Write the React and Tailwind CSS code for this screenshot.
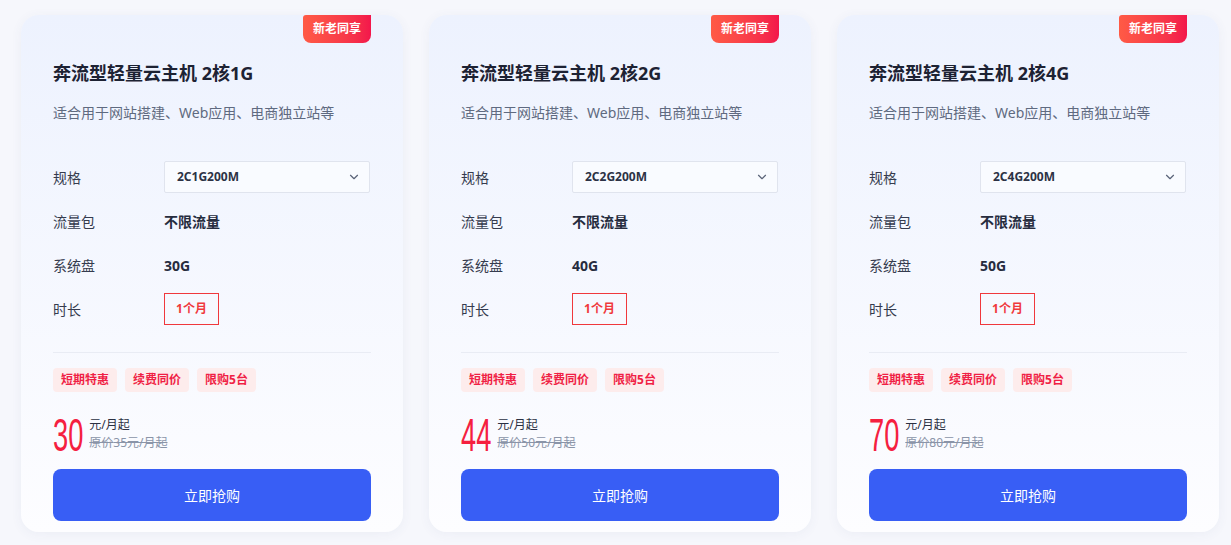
import { ChevronDown } from "lucide-react";

const plans = [
  { core: "2核1G", spec: "2C1G200M", disk: "30G", price: "30", old: "35" },
  { core: "2核2G", spec: "2C2G200M", disk: "40G", price: "44", old: "50" },
  { core: "2核4G", spec: "2C4G200M", disk: "50G", price: "70", old: "80" },
];

const Row = ({ label, children }) => (
  <div className="flex items-center h-8">
    <div className="w-[111px] text-[14px] text-[#353b4e]">{label}</div>
    <div className="flex-1">{children}</div>
  </div>
);

const PlanCard = ({ plan }) => {
  return (
    <div className="relative w-[382px] h-[517px] rounded-[18px] bg-gradient-to-b from-[#edf2fe] to-[#fdfdff] shadow-[0_2px_12px_rgba(60,80,140,0.06)] px-8 pt-[45px]">
      <div className="absolute top-0 right-8 w-[68px] h-7 rounded-b-[8px] rounded-tl-[3px] bg-gradient-to-r from-[#ff5a45] to-[#f3164b] text-white text-[12px] font-bold flex items-center justify-center">
        新老同享
      </div>
      <div className="text-[18px] leading-[26px] font-bold text-[#1d2233]">
        奔流型轻量云主机 {plan.core}
      </div>
      <div className="mt-[16px] text-[14px] leading-[22px] text-[#5f6a80]">
        适合用于网站搭建、Web应用、电商独立站等
      </div>
      <div className="mt-[37px] flex flex-col gap-3">
        <Row label="规格">
          <div className="h-8 w-[206px] border border-[#e0e4ee] rounded-[2px] bg-[#f9fbff] flex items-center justify-between pl-3 pr-2">
            <span className="text-[12px] font-bold text-[#2c3245]">{plan.spec}</span>
            <ChevronDown size={14} strokeWidth={2} className="text-[#5a6378]" />
          </div>
        </Row>
        <Row label="流量包">
          <span className="text-[14px] font-bold text-[#262c3e]">不限流量</span>
        </Row>
        <Row label="系统盘">
          <span className="text-[14px] font-bold text-[#262c3e]">{plan.disk}</span>
        </Row>
        <Row label="时长">
          <div className="h-8 w-[55px] border border-[#f0383c] flex items-center justify-center text-[12px] font-bold text-[#f0383c]">
            1个月
          </div>
        </Row>
      </div>
      <div className="mt-[27px] h-px bg-[#e9ecf4]" />
      <div className="mt-[15px] flex gap-2">
        {["短期特惠", "续费同价", "限购5台"].map((t) => (
          <span
            key={t}
            className="h-6 px-2 rounded-[4px] bg-[#fdecec] text-[#f01f45] text-[12px] font-bold flex items-center"
          >
            {t}
          </span>
        ))}
      </div>
      <div className="mt-[22px] flex items-center h-[40px]">
        <span className="inline-block origin-left scale-x-[0.58] mr-[-22px] text-[47px] leading-none text-[#f5203f] font-['Liberation_Sans',sans-serif]">
          {plan.price}
        </span>
        <div className="ml-[6px] flex flex-col text-[12px] leading-[18px]">
          <span className="text-[#2a3042]">元/月起</span>
          <span className="text-[#8a94a8] line-through">原价{plan.old}元/月起</span>
        </div>
      </div>
      <button className="mt-[15px] w-full h-[52px] rounded-[8px] bg-[#385ef5] text-white text-[14px]">
        立即抢购
      </button>
    </div>
  );
};

export default function App() {
  return (
    <div className="w-[1231px] h-[545px] bg-[#f6f7fc] pl-[21px] pt-[15px] flex gap-[26px] font-['Noto_Sans','Noto_Sans_CJK_SC',sans-serif]">
      {plans.map((p) => (
        <PlanCard key={p.spec} plan={p} />
      ))}
    </div>
  );
}
